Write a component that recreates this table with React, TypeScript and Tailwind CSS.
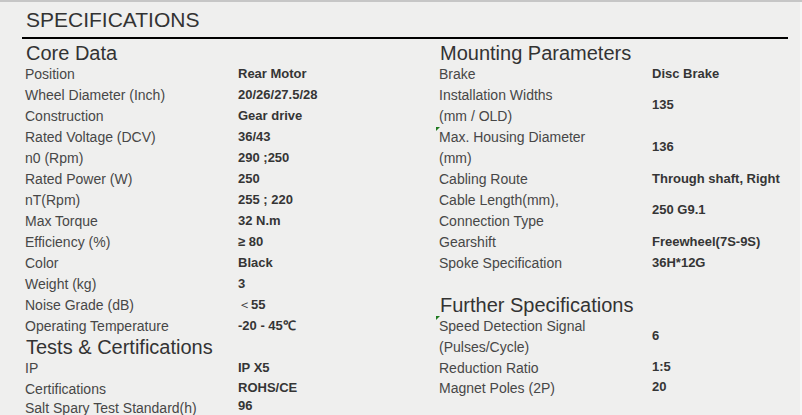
import React from "react";

type Row = {
  label: React.ReactNode;
  value: React.ReactNode;
  lines?: number;
  h?: number;
  mark?: boolean;
};

type Block = { title?: string; rows: Row[] };

const left: Block[] = [
  {
    title: "Core Data",
    rows: [
      { label: "Position", value: "Rear Motor" },
      { label: "Wheel Diameter (Inch)", value: "20/26/27.5/28" },
      { label: "Construction", value: "Gear drive" },
      { label: "Rated Voltage (DCV)", value: "36/43" },
      { label: "n0 (Rpm)", value: "290 ;250" },
      { label: "Rated Power (W)", value: "250" },
      { label: "nT(Rpm)", value: "255 ; 220" },
      { label: "Max Torque", value: "32 N.m" },
      { label: "Efficiency (%)", value: "≥ 80" },
      { label: "Color", value: "Black" },
      { label: "Weight (kg)", value: "3" },
      {
        label: "Noise Grade (dB)",
        value: (
          <>
            <span className="font-normal">＜</span>55
          </>
        ),
      },
      { label: "Operating Temperature", value: "-20 - 45℃" },
    ],
  },
  {
    title: "Tests & Certifications",
    rows: [
      { label: "IP", value: "IP X5" },
      { label: "Certifications", value: "ROHS/CE", h: 19 },
      { label: "Salt Spary Test Standard(h)", value: "96", h: 18 },
    ],
  },
];

const right: Block[] = [
  {
    title: "Mounting Parameters",
    rows: [
      { label: "Brake", value: "Disc Brake" },
      {
        label: (
          <>
            Installation Widths
            <br />
            (mm / OLD)
          </>
        ),
        value: "135",
        lines: 2,
      },
      {
        label: (
          <>
            Max. Housing Diameter
            <br />
            (mm)
          </>
        ),
        value: "136",
        lines: 2,
        mark: true,
      },
      { label: "Cabling Route", value: "Through shaft, Right" },
      {
        label: (
          <>
            Cable Length(mm),
            <br />
            Connection Type
          </>
        ),
        value: "250 G9.1",
        lines: 2,
      },
      { label: "Gearshift", value: "Freewheel(7S-9S)" },
      { label: "Spoke Specification", value: "36H*12G" },
      { label: "", value: "" },
    ],
  },
  {
    title: "Further Specifications",
    rows: [
      {
        label: (
          <>
            Speed Detection Signal
            <br />
            (Pulses/Cycle)
          </>
        ),
        value: "6",
        lines: 2,
        mark: true,
      },
      { label: "Reduction Ratio", value: "1:5", h: 20 },
      { label: "Magnet Poles (2P)", value: "20", h: 20 },
    ],
  },
];

function SpecRow({ row }: { row: Row }) {
  const height = row.h ?? 21 * (row.lines ?? 1);
  return (
    <div className="relative flex" style={{ height }}>
      {row.mark && (
        <span className="absolute left-0 top-0 h-0 w-0 border-t-[4px] border-r-[4px] border-t-[#1f7a1f] border-r-transparent" />
      )}
      <div className="w-[213px] shrink-0 pl-[3px] text-[14px] leading-[21px] text-[#474747]">{row.label}</div>
      <div className="flex items-center pl-[3px] pb-[2px] text-[13px] font-bold text-[#353535]">{row.value}</div>
    </div>
  );
}

function Column({ blocks, className }: { blocks: Block[]; className: string }) {
  return (
    <div className={className}>
      {blocks.map((b, i) => (
        <div key={i}>
          {b.title && (
            <h3 className="h-[21px] pl-[4px] text-[20px] leading-[21px] text-[#333]">{b.title}</h3>
          )}
          {b.rows.map((r, j) => (
            <SpecRow key={j} row={r} />
          ))}
        </div>
      ))}
    </div>
  );
}

export default function App() {
  return (
    <div className="h-[415px] w-[802px] overflow-hidden border-t-2 border-[#c6c6c6] bg-[#efefee] font-['Liberation_Sans',Arial,sans-serif]">
      <div className="flex h-full">
        <div className="w-[800px]">
          <h2 className="h-[35px] pl-[26px] text-[21px] leading-[35px] text-[#333]">SPECIFICATIONS</h2>
          <div className="ml-[22px] h-[2px] w-[766px] bg-black" />
          <div className="ml-[22px] mt-[4px] flex">
            <Column blocks={left} className="flex w-[414px] shrink-0 flex-col" />
            <Column blocks={right} className="flex min-w-0 flex-1 flex-col" />
          </div>
        </div>
        <div className="w-[2px] bg-[#f6f6f6]" />
      </div>
    </div>
  );
}
